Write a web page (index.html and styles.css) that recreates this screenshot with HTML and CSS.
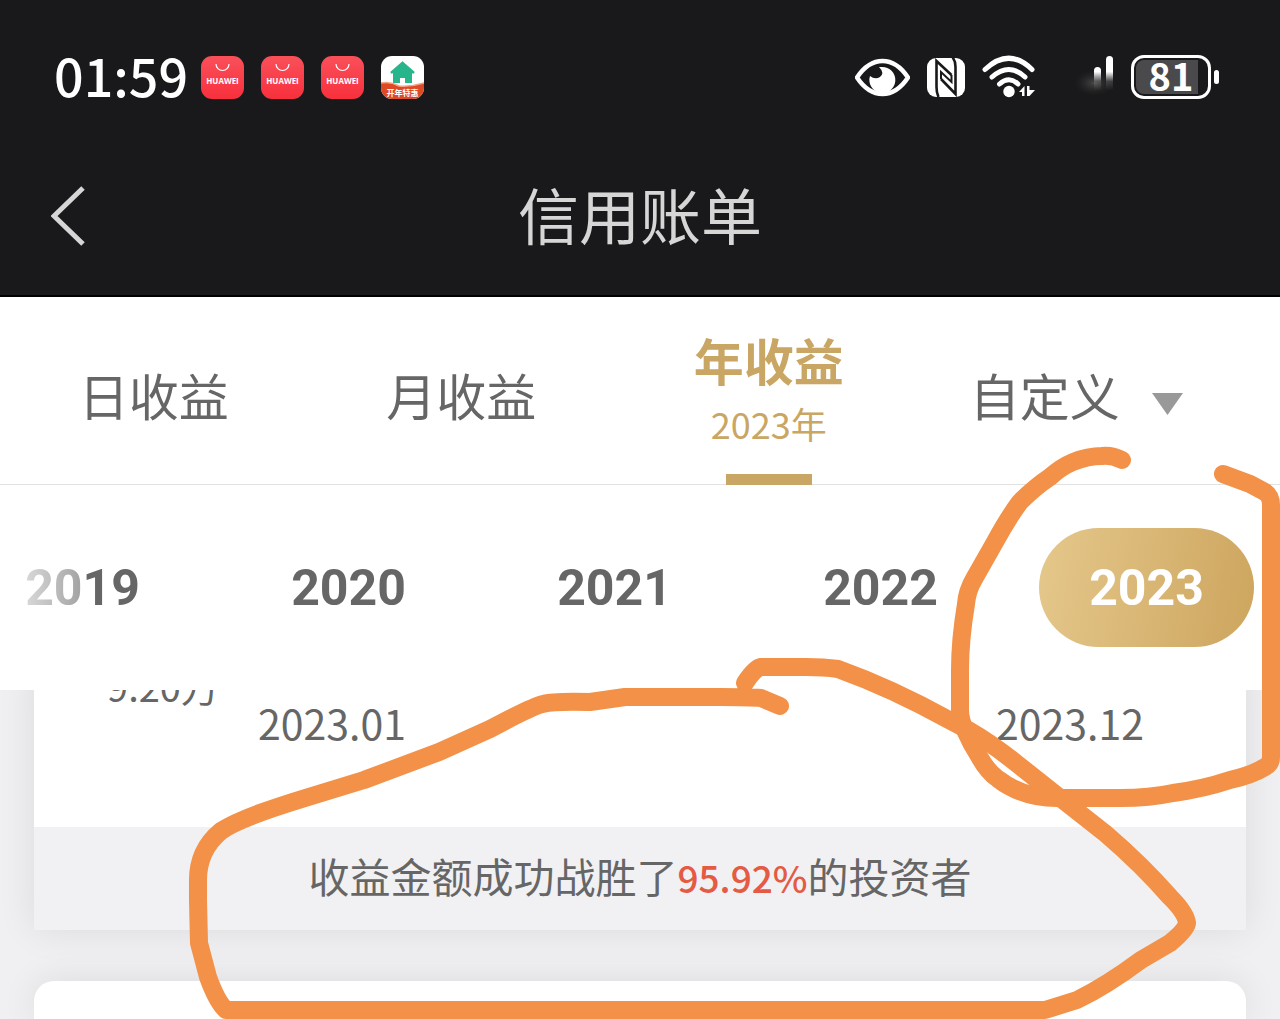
FILE: index.html
```html
<!DOCTYPE html>
<html lang="zh-CN">
<head>
<meta charset="utf-8">
<meta name="viewport" content="width=device-width, initial-scale=1">
<title>信用账单</title>
<link rel="stylesheet" href="styles.css">
</head>
<body>
<div class="screen">
  <header class="top">
    <div class="status">
      <span class="clock">01:59</span>
      <div class="apps">
        <svg class="app" viewBox="0 0 43 43"><defs><linearGradient id="red" x1="0" y1="0" x2="0" y2="1"><stop offset="0" stop-color="#f9505a"/><stop offset="1" stop-color="#f8303d"/></linearGradient></defs><rect width="43" height="43" rx="11" fill="url(#red)"/><path d="M15 8a6.500 6.500 0 0 0 13 0" fill="none" stroke="#fff" stroke-width="1.200"/><text class="brand" x="21.500" y="27.500">HUAWEI</text></svg>
        <svg class="app" viewBox="0 0 43 43"><rect width="43" height="43" rx="11" fill="url(#red)"/><path d="M15 8a6.500 6.500 0 0 0 13 0" fill="none" stroke="#fff" stroke-width="1.200"/><text class="brand" x="21.500" y="27.500">HUAWEI</text></svg>
        <svg class="app" viewBox="0 0 43 43"><rect width="43" height="43" rx="11" fill="url(#red)"/><path d="M15 8a6.500 6.500 0 0 0 13 0" fill="none" stroke="#fff" stroke-width="1.200"/><text class="brand" x="21.500" y="27.500">HUAWEI</text></svg>
        <svg class="app" viewBox="0 0 43 43"><rect width="43" height="43" rx="11" fill="#fff"/><path d="M0 27Q9 25 18 30Q30 31 43 27V32A11 11 0 0 1 32 43H11A11 11 0 0 1 0 32Z" fill="#dc4a26"/><path d="M0 27Q9 25 18 30Q30 31 43 27" fill="none" stroke="#f6a184" stroke-width="1.500"/><path d="M12 16L21.500 8L31 16V27H24V22H19V27H12Z" fill="#27b58b"/><path d="M10 17L21.500 7L33 17" fill="none" stroke="#27b58b" stroke-width="2.500"/><text class="promo" x="21.500" y="39.500">开年特惠</text></svg>
      </div>
      <div class="system">
        <svg width="55" height="39" viewBox="0 0 55 39"><path d="M2 19.500C9 9 18 3 27.500 3S46 9 53 19.500C46 30 37 36 27.500 36S9 30 2 19.500Z" fill="none" stroke="#fff" stroke-width="4.500" stroke-linejoin="round"/><path d="M27 9A13 13 0 1 1 15 18Q20 22 25 19Q30 15 24 9Z" fill="#fff"/></svg>
        <svg width="40" height="40" viewBox="0 0 40 40"><rect x="1" y="1" width="38" height="39" rx="9" fill="#fff"/><path d="M12.500 40Q10.500 36 10.500 30V4L25.500 18M26.500 0Q29.500 4 29.500 10V37L15 22" fill="none" stroke="#19191b" stroke-width="2.600"/><path d="M15 22V15L25.500 25V18" fill="none" stroke="#19191b" stroke-width="2"/></svg>
        <svg class="wifi" width="54" height="44" viewBox="0 0 54 44"><g fill="none" stroke="#fff" stroke-width="5" stroke-linecap="round"><path d="M3 14.500Q27 -8 50 14.500"/><path d="M10 22Q27 7 43 22"/><path d="M17.500 29Q27 20.500 36 29"/></g><circle cx="27" cy="36.500" r="5.700" fill="#fff"/><path d="M37 37L42.500 31V41H40V37ZM45 31H47.500V35H53L47.500 41H45Z" fill="#fff"/></svg>
        <svg width="57" height="44" viewBox="0 0 57 44"><defs><linearGradient id="fade" gradientUnits="userSpaceOnUse" x1="0" y1="0" x2="0" y2="44"><stop offset="0" stop-color="#fff"/><stop offset=".38" stop-color="#fff"/><stop offset=".6" stop-color="#fff" stop-opacity=".15"/><stop offset=".8" stop-color="#fff" stop-opacity="0"/></linearGradient><radialGradient id="haze"><stop offset="0" stop-color="#777" stop-opacity=".5"/><stop offset="1" stop-color="#333" stop-opacity="0"/></radialGradient></defs><ellipse cx="36" cy="28" rx="20" ry="13" fill="url(#haze)"/><rect x="48" y="1" width="7" height="42" rx="3.500" fill="url(#fade)"/><rect x="36" y="12" width="7" height="30" rx="3.500" fill="url(#fade)"/></svg>
        <span class="battery"><span class="level">81</span></span>
      </div>
    </div>
    <div class="nav">
      <button class="back" type="button" aria-label="返回"><svg width="34" height="60" viewBox="0 0 34 60"><path d="M32 2L3 30L32 58" fill="none" stroke="#d6d6d6" stroke-width="5"/></svg></button>
      <h1 class="title">信用账单</h1>
    </div>
  </header>

  <nav class="tabs">
    <button class="tab" type="button">日收益</button>
    <button class="tab" type="button">月收益</button>
    <button class="tab active" type="button"><span class="name">年收益</span><span class="sub">2023年</span></button>
    <button class="tab custom" type="button">自定义<svg class="caret" width="31" height="22" viewBox="0 0 31 22"><path d="M0 0H31L15.500 22Z" fill="#999"/></svg></button>
  </nav>

  <div class="years">
    <button class="year" type="button">2019</button>
    <button class="year" type="button">2020</button>
    <button class="year" type="button">2021</button>
    <button class="year" type="button">2022</button>
    <button class="year selected" type="button">2023</button>
  </div>

  <main class="content">
    <section class="card">
      <div class="axis">
        <span class="value">−9.20万</span>
        <div class="dates"><span>2023.01</span><span>2023.12</span></div>
      </div>
      <p class="summary">收益金额成功战胜了<span class="percent">95.92%</span>的投资者</p>
    </section>
    <section class="card next"></section>
  </main>

  <svg class="marks" viewBox="0 0 1280 1019" aria-hidden="true">
    <path d="M1122 460Q1112 455 1102 456Q1088 456 1073 462Q1061 467 1050 477Q1035 487 1020 502Q1008 518 995 542L974 579Q967 591 966 604Q960 640 960 670V710Q960 719 965 730Q971 744 980 758Q988 772 998 779Q1023 798 1057 798H1120Q1150 798 1173 793Q1203 789 1230 780Q1252 775 1265 767Q1271 764 1271 757V505Q1271 496 1265 492L1250 484L1223 474"/>
    <path d="M780 706L761 698Q750 697 720 697H625L590 702Q553 701 543 704Q533 706 490 729L439 752L364 780L302 799Q240 818 221 831Q198 850 198 880V900L199 943L208 977Q217 1002 226 1010H1045L1077 1000Q1106 986 1141 960L1170 943Q1187 929 1187 923Q1186 913 1170 897Q1142 865 1106 834L1059 797L1016 763Q991 743 970 731L949 720Q891 688 838 669Q824 667 806 667H761Q755 668 745 683"/>
  </svg>
</div>
</body>
</html>
```
FILE: styles.css
```css
* { box-sizing: border-box; }

body {
  margin: 0;
  background: #f0f0f2;
  color: #666;
  font-family: "Noto Sans CJK SC", sans-serif;
}

button {
  padding: 0;
  border: 0;
  background: none;
  color: inherit;
  font: inherit;
}

svg { display: block; flex: none; }

.screen {
  position: relative;
  display: flex;
  flex-direction: column;
  min-height: 100vh;
  overflow: hidden;
}

.top {
  background: #19191b;
  border-bottom: 2px solid #000;
}

.status {
  display: flex;
  align-items: center;
  height: 154px;
  padding: 0 61px 0 54px;
}

.clock {
  padding-bottom: 4px;
  color: #fff;
  font-size: 52px;
  font-weight: 500;
  line-height: 60px;
}

.apps {
  display: flex;
  gap: 17px;
  margin-left: 13px;
}

.app { width: 43px; height: 43px; }

.brand {
  fill: #fff;
  font: 700 8px "Open Sans", sans-serif;
  text-anchor: middle;
}

.promo {
  fill: #fff;
  font: 700 8px "Noto Sans CJK SC", sans-serif;
  text-anchor: middle;
}

.system {
  display: flex;
  align-items: center;
  gap: 16px;
  margin-left: auto;
}

.wifi { margin-right: 6px; }

.battery {
  position: relative;
  width: 80px;
  height: 44px;
  margin-right: 8px;
  padding: 2px;
  border: 3px solid #fff;
  border-radius: 13px;
}

.battery::after {
  content: "";
  position: absolute;
  top: 12px;
  right: -11px;
  width: 5px;
  height: 14px;
  border-radius: 3px;
  background: #fff;
}

.level {
  display: block;
  height: 34px;
  border-radius: 8px;
  background: linear-gradient(90deg, #4a4a4c 88%, #19191b 88%);
  color: #fff;
  font-size: 38px;
  font-weight: 700;
  line-height: 30px;
  text-align: center;
}

.nav {
  display: grid;
  grid-template-columns: 1fr auto 1fr;
  align-items: start;
  height: 141px;
  padding: 0 51px;
}

.back { justify-self: start; margin-top: 32px; }

.title {
  margin: 0;
  color: #d6d6d6;
  font-size: 61px;
  font-weight: 400;
  line-height: 120px;
}

.tabs {
  display: grid;
  grid-template-columns: repeat(4, 1fr);
  height: 188px;
  padding: 0 50px 0 0;
  border-bottom: 1px solid #e2e2e2;
  background: #fff;
}

.tab {
  display: flex;
  align-items: center;
  justify-content: center;
  padding-top: 6px;
  font-size: 50px;
  line-height: 64px;
}

.active {
  position: relative;
  flex-direction: column;
  justify-content: flex-start;
  padding-top: 30px;
  color: #c9a663;
}

.active::after {
  content: "";
  position: absolute;
  bottom: -1px;
  width: 86px;
  height: 11px;
  background: #c9a663;
}

.name { font-weight: 700; }

.sub { font-size: 36px; }

.custom { gap: 32px; }

.caret { margin-top: 20px; }

.years {
  position: relative;
  display: flex;
  justify-content: flex-end;
  gap: 51px;
  padding: 43px 26px;
  overflow: hidden;
  background: #fff;
}

.years::before {
  content: "";
  position: absolute;
  top: 0;
  left: 0;
  width: 82px;
  height: 100%;
  background: linear-gradient(90deg, rgba(255, 255, 255, .9), rgba(255, 255, 255, .4));
}

.year {
  flex: 0 0 215px;
  height: 119px;
  border-radius: 60px;
  font-family: Roboto, sans-serif;
  font-size: 50px;
  font-weight: 700;
}

.selected {
  background: linear-gradient(100deg, #e5c88c, #cda55e);
  color: #fff;
}

.content {
  display: flex;
  flex: 1;
  flex-direction: column;
  gap: 51px;
  padding: 0 34px;
  overflow: hidden;
}

.card {
  margin-top: -24px;
  background: #fff;
  box-shadow: 0 0 36px rgba(0, 0, 0, .09);
}

.axis {
  display: flex;
  height: 161px;
  padding: 0 102px 0 52px;
  font-size: 41px;
  line-height: 40px;
}

.value { width: 172px; font-size: 38px; }

.dates {
  display: flex;
  flex: 1;
  justify-content: space-between;
  padding-top: 36px;
}

.summary {
  height: 103px;
  margin: 0;
  padding: 18px 0;
  background: #f1f1f3;
  font-size: 41px;
  line-height: 60px;
  text-align: center;
}

.percent { color: #e45a43; font-size: 37px; font-weight: 500; }

.next {
  flex: 1;
  min-height: 38px;
  margin-top: 0;
  border-radius: 20px 20px 0 0;
}

.marks {
  position: absolute;
  top: 0;
  left: 0;
  width: 100%;
  fill: none;
  stroke: #f29147;
  stroke-width: 18;
  stroke-linecap: round;
  stroke-linejoin: round;
  pointer-events: none;
}
```
